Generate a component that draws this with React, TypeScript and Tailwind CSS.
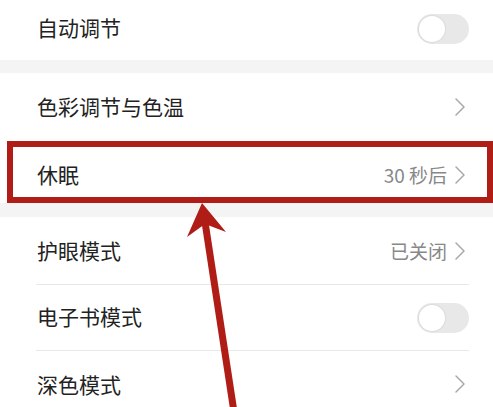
import React from "react";

const Chevron = () => (
  <svg width="12" height="20" viewBox="0 0 12 20" className="shrink-0">
    <path d="M2 2 L10 10 L2 18" fill="none" stroke="#a8a8a8" strokeWidth="1.5" strokeLinecap="round" strokeLinejoin="round" />
  </svg>
);

const Toggle = () => (
  <div className="relative w-[52px] h-[30px] rounded-full bg-[#e8e8e8]">
    <div className="absolute left-[2px] top-[2px] w-[26px] h-[26px] rounded-full bg-white shadow-[0_0_1px_1px_rgba(0,0,0,0.06)]" />
  </div>
);

export default function App() {
  const font = { fontFamily: '"Noto Sans CJK SC", "Noto Sans", sans-serif' };
  return (
    <div className="relative w-[493px] h-[407px] overflow-hidden bg-white text-[#222]" style={font}>
      <div className="flex flex-col">
        <div className="h-[60px] flex items-center justify-between pl-[37px] pr-[24px]">
          <span className="text-[21px] leading-none -mt-[5px]">自动调节</span>
          <div className="-mt-[2px]">
            <Toggle />
          </div>
        </div>
        <div className="h-[13px] bg-[#f4f4f4]" />
        <div className="h-[68px] flex items-center justify-between pl-[37px] pr-[27px]">
          <span className="text-[21px] leading-none -mt-[1px]">色彩调节与色温</span>
          <Chevron />
        </div>
        <div className="ml-[7px] h-[62px] border-[6px] border-[#b01d16] flex items-center justify-between pl-[24px] pr-[21px] pt-[5px]">
          <span className="text-[21px] leading-none -mt-[1px]">休眠</span>
          <div className="flex items-center gap-[7px]">
            <span className="text-[19px] leading-none text-[#888]">30 秒后</span>
            <Chevron />
          </div>
        </div>
        <div className="h-[14px] bg-[#f4f4f4]" />
        <div className="h-[67px] flex items-center justify-between pl-[37px] pr-[27px]">
          <span className="text-[21px] leading-none -mt-[1px]">护眼模式</span>
          <div className="flex items-center gap-[7px]">
            <span className="text-[19px] leading-none text-[#888]">已关闭</span>
            <Chevron />
          </div>
        </div>
        <div className="h-px bg-[#e8e8e8] ml-[36px] mr-[24px]" />
        <div className="h-[65px] flex items-center justify-between pl-[37px] pr-[24px]">
          <span className="text-[21px] leading-none -mt-[3px]">电子书模式</span>
          <Toggle />
        </div>
        <div className="h-px bg-[#e8e8e8] ml-[36px] mr-[24px]" />
        <div className="h-[66px] flex items-center justify-between pl-[37px] pr-[27px]">
          <span className="text-[21px] leading-none">深色模式</span>
          <Chevron />
        </div>
      </div>
      <svg className="absolute left-0 top-0 pointer-events-none" width="493" height="407" viewBox="0 0 493 407">
        <line x1="205" y1="222" x2="234" y2="412" stroke="#b01d16" strokeWidth="7" />
        <polygon points="202,203 187,237 205,224 226,232" fill="#b01d16" />
      </svg>
    </div>
  );
}
